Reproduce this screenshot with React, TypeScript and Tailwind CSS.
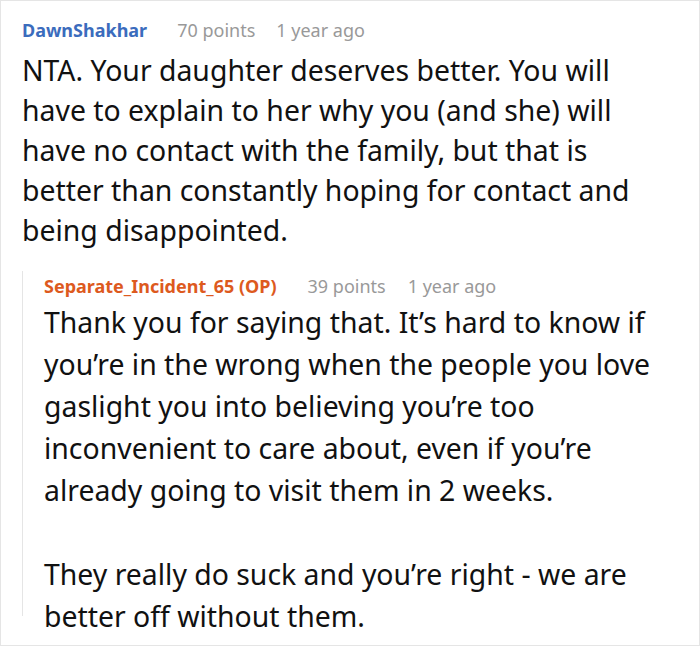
export default function App() {
  return (
    <div className="w-[700px] h-[646px] bg-white border border-[#e5e5e5] overflow-hidden" style={{ fontFamily: '"Noto Sans", sans-serif' }}>
      <div className="pl-[21px] pr-[44px] pt-[14px]">
        {/* PARENT COMMENT */}
        <div className="flex items-center text-[18px] leading-[30px]">
          <span className="font-bold text-[#3b6cbd] mr-[30px]">DawnShakhar</span>
          <span className="text-[#999999] mr-[21px]">70 points</span>
          <span className="text-[#999999]">1 year ago</span>
        </div>
        <p className="text-[28.4px] leading-[40px] text-[#111111] mt-[5px]">
          NTA. Your daughter deserves better. You will have to explain to her why you (and she) will have no contact with the family, but that is better than constantly hoping for contact and being disappointed.
        </p>

        {/* REPLY */}
        <div className="mt-[32px] border-l border-[#e5e5e5] pl-[21px] h-[345px]">
          <div className="flex items-center text-[18px] leading-[30px] -mt-[11px]">
            <span className="font-bold text-[#dd5a1e] mr-[31px]">Separate_Incident_65 (OP)</span>
            <span className="text-[#999999] mr-[22px]">39 points</span>
            <span className="text-[#999999]">1 year ago</span>
          </div>
          <p className="text-[28.4px] leading-[42px] text-[#111111]">
            Thank you for saying that. It’s hard to know if you’re in the wrong when the people you love gaslight you into believing you’re too inconvenient to care about, even if you’re already going to visit them in 2 weeks.
          </p>
          <p className="text-[28.4px] leading-[42px] text-[#111111] mt-[42px]">
            They really do suck and you’re right - we are better off without them.
          </p>
        </div>
      </div>
    </div>
  )
}
